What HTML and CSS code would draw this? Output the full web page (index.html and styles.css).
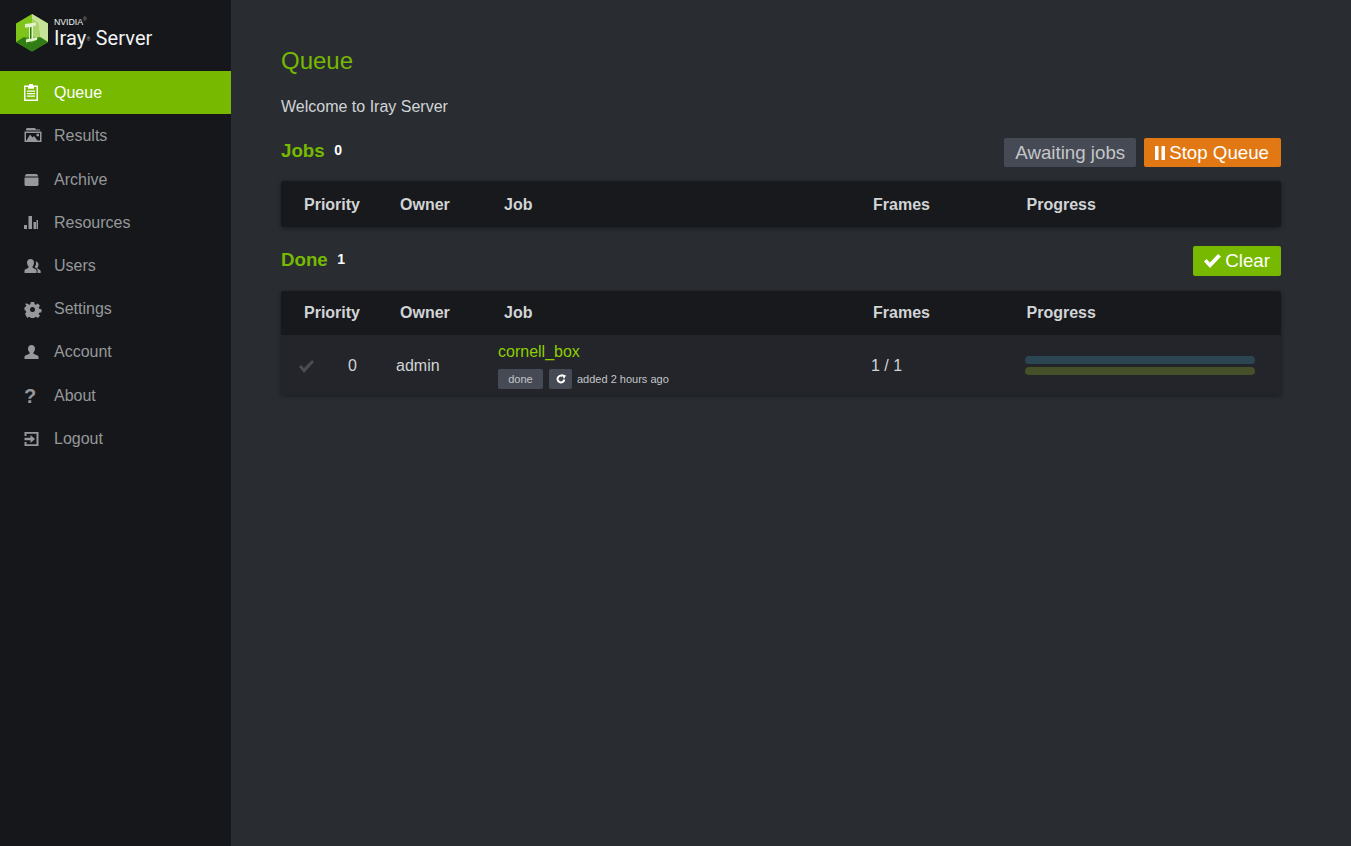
FILE: index.html
```html
<!DOCTYPE html>
<html lang="en">
<head>
<meta charset="utf-8">
<title>Iray Server</title>
<link rel="stylesheet" href="styles.css">
</head>
<body>
<div class="app">
  <aside class="sidebar">
    <div class="brand">
      <svg class="logo" width="34" height="38" viewBox="0 0 34 38">
        <polygon points="17,0 33,9.500 33,28 17,37.500 1,28 1,9.500" fill="#7fc41a"/>
        <polygon points="17,0 33,9.500 33,28 25,23 23,9 17,5" fill="#c6e29b"/>
        <polygon points="17,5 23,9 25,23 17,23" fill="#a9d46a"/>
        <polygon points="1,28 9,23 25,23 33,28 17,37.500" fill="#2f7d14"/>
        <polygon points="9,23 25,23 17,29" fill="#56a31c"/>
        <path d="M10 10l11-1.500v3l-3 .7V24l4-1v3l-11 2.500v-3l3-.7V13l-4 .7z" fill="#e4f2cb"/>
        <path d="M15 13.200l1.500-.3V24.500l-1.500.4z" fill="#2b7412"/>
      </svg>
      <div class="brand-text">
        <div class="brand-top">NVIDIA<sup class="reg">®</sup></div>
        <div class="brand-name">Iray<sup class="reg">®</sup> Server</div>
      </div>
    </div>
    <nav class="nav">
      <a class="nav-item active">
        <svg class="nav-icon" viewBox="0 0 18 18"><path fill="currentColor" fill-rule="evenodd" d="M5 0h4v1.500h5V17H0V1.500h5zM1.500 3v12.500h11V3H10v1.800H4V3zM3 6.500h8v1.200H3zM3 9h8v1.200H3zM3 11.500h8v1.200H3z"/></svg>
        <span>Queue</span>
      </a>
      <a class="nav-item">
        <svg class="nav-icon" viewBox="0 0 18 18"><path fill="currentColor" fill-rule="evenodd" d="M3 1h8l1 1.500h4v1H2V2zM.5 4.500H17.500V15H.5zM2 6v7.500h14V6zM2.500 13.500l3.500-6 2.500 3 1.500-1.500 3.500 4.500zM12.500 6.800h2.500v2.500h-2.500z"/></svg>
        <span>Results</span>
      </a>
      <a class="nav-item">
        <svg class="nav-icon" viewBox="0 0 18 18"><path fill="currentColor" d="M3 3h9c1.200 0 1.800.8 2.200 2.500H.8C1.200 3.800 1.800 3 3 3zM.5 6.500h14V13.500c0 .9-.6 1.500-1.500 1.500H2c-.9 0-1.500-.6-1.500-1.500z"/></svg>
        <span>Archive</span>
      </a>
      <a class="nav-item">
        <svg class="nav-icon" viewBox="0 0 18 18"><path fill="currentColor" d="M0 11h3v4H0zM4.500 2H8v13H4.500zM9.500 8H12v7H9.500zM12.500 6H14v9h-1.500z"/></svg>
        <span>Resources</span>
      </a>
      <a class="nav-item">
        <svg class="nav-icon" viewBox="0 0 18 18"><path fill="currentColor" d="M6.500 2C9 2 10 3.800 10 5.800c0 1.500-.6 2.800-1.400 3.600v1.300l3 1.500c.8.400 1 1 1 1.600V16H.5v-2.200c0-.6.200-1.200 1-1.600l3-1.500V9.400C3.700 8.600 3 7.300 3 5.800 3 3.800 4 2 6.500 2zM13.500 16v-2.500c0-1-.5-1.800-1.300-2.200l-1.200-.7V9.500c.8-.9 1-2 1-3.200 0-.7-.1-1.300-.3-1.800 1.800 0 2.800 1.400 2.800 3.100 0 1.200-.4 2.300-1.100 3v1l2.300 1.200c.7.400 1 1 1 1.600V16z"/></svg>
        <span>Users</span>
      </a>
      <a class="nav-item">
        <svg class="nav-icon" viewBox="0 0 18 18"><path fill="currentColor" fill-rule="evenodd" d="M6.800 2h3.400l.4 2.200 1.300.6 1.900-1.300 2.200 2.200-1.300 1.900.5 1.200 2.300.5v3l-2.300.4-.5 1.300 1.300 1.800-2.200 2.200-1.900-1.300-1.300.5-.4 1.800H6.800l-.4-1.800-1.300-.5-1.900 1.300L1 13.800l1.300-1.800-.5-1.300L.5 10.300v-3l1.300-.5.5-1.200L1 3.700l2.200-.2 1.900 1.300 1.300-.6zM8.500 7a2.500 2.500 0 1 0 0 5 2.500 2.500 0 0 0 0-5z"/></svg>
        <span>Settings</span>
      </a>
      <a class="nav-item">
        <svg class="nav-icon" viewBox="0 0 18 18"><path fill="currentColor" d="M7.500 2C10 2 11 3.800 11 5.700c0 1.400-.6 2.700-1.500 3.500v1.500l4 1.800c.8.400 1 .9 1 1.500V16H.5v-2c0-.6.200-1.100 1-1.500l4-1.800V9.200C4.600 8.400 4 7.100 4 5.700 4 3.800 5 2 7.500 2z"/></svg>
        <span>Account</span>
      </a>
      <a class="nav-item">
        <span class="nav-icon nav-glyph">?</span>
        <span>About</span>
      </a>
      <a class="nav-item">
        <svg class="nav-icon" viewBox="0 0 18 18"><path fill="currentColor" d="M.5 2h14v14H.5v-4h2v2.300h10V3.700h-10V6h-2zM6.500 5l4.500 4-4.500 4v-2.700H.5V7.700h6z"/></svg>
        <span>Logout</span>
      </a>
    </nav>
  </aside>

  <main class="main">
    <h1 class="page-title">Queue</h1>
    <p class="welcome">Welcome to Iray Server</p>

    <section class="jobs-section">
      <div class="section-head">
        <h2 class="section-title">Jobs</h2>
        <span class="count">0</span>
        <div class="actions">
          <span class="btn btn-status">Awaiting jobs</span>
          <span class="btn btn-stop"><svg class="btn-icon pause" viewBox="0 0 10 14"><path fill="currentColor" d="M0 0h3.500v14H0zM6.500 0H10v14H6.500z"/></svg>Stop Queue</span>
        </div>
      </div>
      <div class="panel">
        <div class="cols head-row">
          <span>Priority</span><span>Owner</span><span>Job</span><span>Frames</span><span>Progress</span>
        </div>
      </div>
    </section>

    <section class="done-section">
      <div class="section-head">
        <h2 class="section-title">Done</h2>
        <span class="count">1</span>
        <div class="actions">
          <span class="btn btn-clear"><svg class="btn-icon check" viewBox="0 0 17 14"><path fill="currentColor" d="M0 7.500l2.500-2.500 3.500 3.500L14 0l3 2.500L6 14z"/></svg>Clear</span>
        </div>
      </div>
      <div class="panel">
        <div class="cols head-row">
          <span>Priority</span><span>Owner</span><span>Job</span><span>Frames</span><span>Progress</span>
        </div>
        <div class="job-row">
          <svg class="row-check" viewBox="0 0 15 13"><path fill="currentColor" d="M0 7l2-2 3 3 8-8 2 2L5 13z"/></svg>
          <span class="prio">0</span>
          <span>admin</span>
          <div class="job-info">
            <div class="job-name">cornell_box</div>
            <div class="job-meta">
              <span class="tag tag-done">done</span>
              <span class="tag tag-icon"><svg width="10" height="10" viewBox="0 0 10 10"><path fill="none" stroke="currentColor" stroke-width="2" d="M8.300 5.500A3.400 3.400 0 1 1 6.500 2"/><path fill="currentColor" d="M5.500 0L10 1.500 8 5z"/></svg></span>
              <span class="added">added 2 hours ago</span>
            </div>
          </div>
          <span>1 / 1</span>
          <div class="bars">
            <div class="bar bar-blue"></div>
            <div class="bar bar-green"></div>
          </div>
        </div>
      </div>
    </section>
  </main>
</div>
</body>
</html>
```
FILE: styles.css
```css
* { box-sizing: border-box; }
html, body { margin: 0; height: 100%; }
body {
  font-family: "Liberation Sans", Arial, sans-serif;
  font-size: 16px;
  color: #d2d4d6;
  background: #292d32;
  overflow: hidden;
}
.app { display: flex; height: 846px; }

.sidebar { width: 231px; flex: none; background: #15171b; }
.brand { height: 71px; display: flex; align-items: flex-start; padding: 14px 0 0 15px; }
.logo { flex: none; }
.brand-text { margin-left: 5px; color: #f2f2f2; }
.brand-top { font-size: 8.800px; line-height: 10px; margin-top: 3px; letter-spacing: -.05px; }
.brand-name { font-family: "Roboto", sans-serif; font-size: 20px; line-height: 23px; letter-spacing: .1px; }
.reg { font-size: 5px; line-height: 0; vertical-align: 4px; color: #9a9a9a; }

.nav { display: flex; flex-direction: column; }
.nav-item { display: flex; align-items: center; height: 43.200px; padding: 1.400px 0 0 24px; color: #96989a; }
.nav-item.active { color: #fff; background: #76b900; }
.nav-icon { width: 18px; height: 18px; flex: none; margin-right: 12px; }
.nav-glyph { font-size: 20px; font-weight: bold; line-height: 18px; }

.main { flex: 1; padding: 46px 70px 0 50px; }
.page-title { margin: 0; font-size: 24px; line-height: 30px; font-weight: normal; color: #76b900; }
.welcome { margin: 21px 0 0; line-height: 20px; }

.section-head { display: flex; align-items: flex-start; }
.jobs-section { margin-top: 21px; }
.done-section { margin-top: 19px; }
.section-title { margin: 0; font-size: 18.720px; line-height: 25px; font-weight: bold; color: #76b900; }
.count { font-size: 14px; font-weight: bold; color: #fff; margin-left: 9.500px; line-height: 25px; }
.done-section .section-title { margin-top: 1px; }
.done-section .count { margin-top: 1px; }
.actions { margin-left: auto; display: flex; gap: 8px; }
.btn { display: flex; align-items: center; height: 29px; padding: 0 11px; border-radius: 2px; font-size: 18.720px; color: #fff; }
.btn-status { background: #454a54; color: #c4c6c9; }
.btn-stop { background: #e27814; padding: 0 12px 0 11px; }
.btn-clear { background: #76b900; height: 30px; padding: 0 11px; }
.btn-icon { flex: none; margin-right: 4px; }
.pause { width: 10px; height: 14px; }
.check { width: 17px; height: 14px; }

.panel { margin-top: 14px; border-radius: 3px; background: #23252a; box-shadow: 0 1px 4px rgba(0, 0, 0, .45); overflow: hidden; }
.done-section .panel { margin-top: 15px; }
.cols { display: grid; grid-template-columns: 96px 104px 369px 153.500px 1fr; padding-left: 23px; align-items: center; }
.head-row { height: 46px; padding-top: 1px; background: #17191d; font-weight: bold; color: #d2d4d6; }
.done-section .head-row { height: 44px; padding-top: 0; }

.job-row { display: grid; grid-template-columns: 49px 48px 102px 373px 154px 230px; padding: 2px 0 0 18px; align-items: center; height: 60px; background: #23252a; }
.row-check { width: 15px; height: 13px; color: #4a4c50; }
.job-info { display: flex; flex-direction: column; }
.job-name { color: #8fce00; line-height: 18px; }
.job-meta { display: flex; align-items: center; margin: 8px 0 1px; }
.tag { display: flex; align-items: center; justify-content: center; height: 20px; border-radius: 2px; background: #454a54; font-size: 11px; color: #c4c6c9; }
.tag-done { width: 45px; }
.tag-icon { width: 23px; margin-left: 6px; color: #fff; }
.added { font-size: 11px; margin-left: 5px; color: #c4c6c9; }
.bars { display: flex; flex-direction: column; gap: 3px; margin-bottom: 2px; }
.bar { height: 8px; border-radius: 4px; }
.bar-blue { background: #2b4552; }
.bar-green { background: #454f28; }
```
